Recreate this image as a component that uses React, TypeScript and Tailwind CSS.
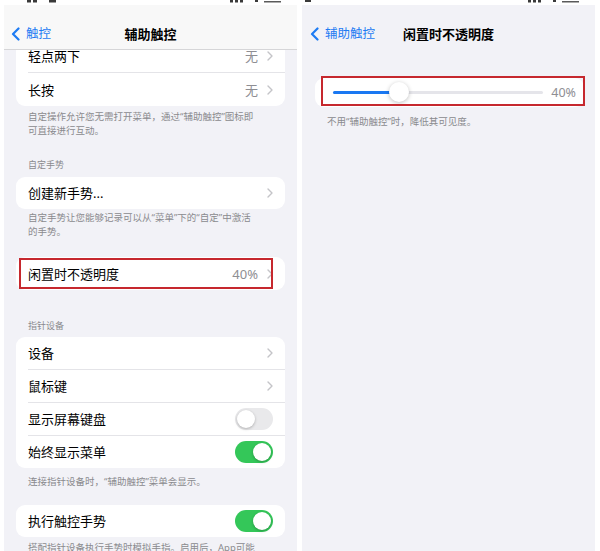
import React from "react";

const font = { fontFamily: '"Noto Sans", "Noto Sans CJK SC", sans-serif' };

const Chevron = () => (
  <svg width="6" height="10" viewBox="0 0 6 10" className="shrink-0">
    <path d="M1 1l4 4-4 4" fill="none" stroke="#c4c4c8" strokeWidth="1.4" strokeLinecap="round" strokeLinejoin="round" />
  </svg>
);

const BackChevron = () => (
  <svg width="9" height="14" viewBox="0 0 9 14" className="shrink-0">
    <path d="M7.5 1.5L2 7l5.5 5.5" fill="none" stroke="#1d7bf3" strokeWidth="2.2" strokeLinecap="round" strokeLinejoin="round" />
  </svg>
);

const Toggle = ({ on }: { on: boolean }) => (
  <div
    className={`w-[38px] h-[22px] rounded-full p-[2px] flex items-center ${
      on ? "bg-[#34c759] justify-end" : "bg-[#e9e9eb] justify-start"
    }`}
  >
    <div className="w-[18px] h-[18px] rounded-full bg-white shadow-[0_1px_3px_rgba(0,0,0,0.25)]" />
  </div>
);

const Row = ({
  label,
  value,
  chevron,
  toggle,
  h = "h-[33px]",
  divider,
}: {
  label: string;
  value?: string;
  chevron?: boolean;
  toggle?: boolean;
  h?: string;
  divider?: boolean;
}) => (
  <div className={`${h} pl-3 flex`}>
    <div className={`flex-1 flex items-center pr-3 ${divider ? "border-b border-[#e4e4e8]" : ""}`}>
      <span className="flex-1 text-[13px] leading-[18px] text-black">{label}</span>
      {value && <span className="text-[13px] leading-[18px] text-[#8e8e93] mr-[9px]">{value}</span>}
      {chevron && <Chevron />}
      {toggle !== undefined && <Toggle on={toggle} />}
    </div>
  </div>
);

const Footer = ({ children, pt }: { children: React.ReactNode; pt: string }) => (
  <div className={`px-6 ${pt} text-[9.5px] leading-[14px] text-[#8a8a8e]`}>{children}</div>
);

// tops of the status bar glyphs that were cut off by the screenshot crop
const StatusStrip = ({ right }: { right?: boolean }) => (
  <div className="h-[5px] bg-white overflow-hidden">
    <svg width="293" height="5" viewBox="0 0 293 5" className="block">
      {!right && (
        <>
          <rect x="23" y="0" width="4" height="2.5" fill="#3a3a3a" />
          <rect x="29" y="0" width="4" height="2.5" fill="#3a3a3a" />
          <rect x="45" y="0" width="7" height="2.5" fill="#3a3a3a" />
        </>
      )}
      {right && <rect x="3" y="0" width="6" height="2" fill="#3a3a3a" />}
      <rect x="226" y="0" width="3" height="2.5" fill="#3a3a3a" />
      <rect x="231" y="0" width="3" height="2.5" fill="#3a3a3a" />
      <rect x="236" y="0" width="3" height="2.5" fill="#3a3a3a" />
      <rect x="251" y="0" width="3" height="2" fill="#3a3a3a" />
      <rect x="260" y="1" width="17" height="1.5" fill="#5a5a5a" />
    </svg>
  </div>
);

const LeftPanel = () => (
  <div className="w-[293px] h-[551px] shrink-0 overflow-hidden">
    <StatusStrip />
    <div className="h-[546px] bg-[#f2f2f7]">
      <div className="relative z-10 h-[45px] bg-[#f8f8f8] border-b border-[#d6d6d8] flex items-center pt-[13px] px-[7px]">
        <div className="flex items-center gap-[6px] w-[80px]">
          <BackChevron />
          <span className="text-[12.5px] leading-[16px] text-[#1d7bf3]">触控</span>
        </div>
        <div className="flex-1 text-center text-[13px] leading-[16px] font-bold text-black pr-[80px]">辅助触控</div>
      </div>

      <div className="mx-3 -mt-[10px] bg-white rounded-[9px]">
        <Row label="轻点两下" value="无" chevron divider />
        <Row label="长按" value="无" chevron />
      </div>
      <Footer pt="pt-[4px]">
        自定操作允许您无需打开菜单，通过“辅助触控”图标即
        <br />
        可直接进行互动。
      </Footer>

      <div className="px-6 pt-[20px] pb-[5px] text-[9px] leading-[14px] text-[#8a8a8e]">自定手势</div>
      <div className="mx-3 bg-white rounded-[9px]">
        <Row label="创建新手势..." chevron h="h-[32px]" />
      </div>
      <Footer pt="pt-[2px]">
        自定手势让您能够记录可以从“菜单”下的“自定”中激活
        <br />
        的手势。
      </Footer>

      <div className="relative mx-3 mt-[18px] bg-white rounded-[9px]">
        <Row label="闲置时不透明度" value="40%" chevron />
        <div className="absolute left-[3px] right-[12px] top-[1px] bottom-[1px] border-2 border-[#c6282e]" />
      </div>

      <div className="px-6 pt-[29px] pb-[4px] text-[9px] leading-[14px] text-[#8a8a8e]">指针设备</div>
      <div className="mx-3 bg-white rounded-[9px]">
        <Row label="设备" chevron divider />
        <Row label="鼠标键" chevron divider />
        <Row label="显示屏幕键盘" toggle={false} divider />
        <Row label="始终显示菜单" toggle h="h-[32px]" />
      </div>
      <Footer pt="pt-[7px]">连接指针设备时，“辅助触控”菜单会显示。</Footer>

      <div className="mx-3 mt-[16px] bg-white rounded-[9px]">
        <Row label="执行触控手势" toggle h="h-[32px]" />
      </div>
      <Footer pt="pt-[4px]">搭配指针设备执行手势时模拟手指。启用后，App可能</Footer>
    </div>
  </div>
);

const RightPanel = () => (
  <div className="w-[293px] h-[551px] shrink-0 overflow-hidden">
    <StatusStrip right />
    <div className="h-[546px] bg-[#f2f2f7] overflow-hidden">
      <div className="h-[45px] flex items-center pt-[13px] px-[8px]">
        <div className="flex items-center gap-[6px] w-[90px]">
          <BackChevron />
          <span className="text-[12.5px] leading-[16px] text-[#1d7bf3]">辅助触控</span>
        </div>
        <div className="flex-1 text-center text-[13px] leading-[16px] font-bold text-black pr-[90px]">闲置时不透明度</div>
      </div>

      <div className="relative ml-[13px] mr-[11px] mt-[28px] h-[29px] bg-white rounded-[9px] flex items-center pl-[18px] pr-[8px]">
        <div className="relative flex-1 h-[3px] rounded-full bg-[#e5e5ea]">
          <div className="absolute left-0 top-0 h-[3px] w-[60px] rounded-full bg-[#1a78f2]" />
          <div className="absolute left-[56px] top-[-9px] w-[20px] h-[20px] rounded-full bg-white shadow-[0_1px_4px_rgba(0,0,0,0.25)]" />
        </div>
        <span className="ml-[8px] text-[12.5px] leading-[16px] text-[#8e8e93]">40%</span>
        <div className="absolute left-[6px] right-[-1px] top-[-2px] bottom-[1px] border-2 border-[#c6282e]" />
      </div>
      <div className="pl-[25px] pt-[8px] text-[9.5px] leading-[14px] text-[#8a8a8e]">
        不用“辅助触控”时，降低其可见度。
      </div>
    </div>
  </div>
);

export default function App() {
  return (
    <div className="w-[600px] h-[551px] bg-white flex gap-[5px] pl-[4px] overflow-hidden" style={font}>
      <LeftPanel />
      <RightPanel />
    </div>
  );
}
